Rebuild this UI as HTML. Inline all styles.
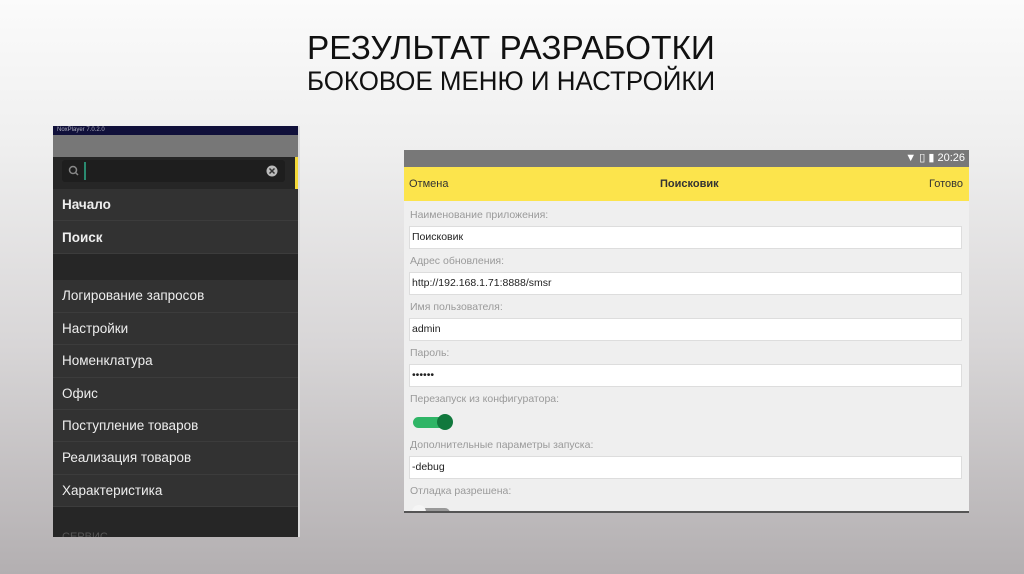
<!DOCTYPE html>
<html><head><meta charset="utf-8"><style>
*{margin:0;padding:0;box-sizing:border-box}
body{width:1024px;height:574px;overflow:hidden;position:relative;font-family:"Liberation Sans",sans-serif;background:linear-gradient(#fbfbfb 0%,#efefef 25%,#d8d6d7 60%,#b3afb1 100%)}
.t1,.t2{position:absolute;left:307px;color:#111;white-space:nowrap;transform-origin:0 0}
.t1{top:29px;font-size:33px;transform:scaleX(1.01)}
.t2{top:66px;font-size:27px;transform:scaleX(0.96)}
.lp{position:absolute;left:53px;top:126px;width:247px;height:411px;background:#303030;overflow:hidden;border-right:2px solid #ddd}
.lp .tb{height:9px;background:#10103a;color:#aab;font-size:6px;padding-left:4px;line-height:9px}
.lp .gb{height:22px;background:#777}
.lp .sa{height:32px;background:#262626;position:relative}
.lp .sb{position:absolute;left:9px;top:3px;width:223px;height:22px;background:#1e1e1e;border-radius:3px}
.it{height:32.4px;line-height:32px;color:#eee;font-size:13.5px;padding-left:9px;border-bottom:1px solid #3c3c3c;background:#323232}
.b{font-weight:bold}
.rp{position:absolute;left:404px;top:150px;width:565px;height:363px;background:#efefef;overflow:hidden;border-bottom:2px solid #555}
.sb2{height:17px;background:#787878;color:#fff;font-size:11px;text-align:right;padding-right:4px;line-height:17px}
.yb{height:34px;background:#fce44c;font-size:11px;color:#333;position:relative;line-height:34px}
.lab{font-size:10.5px;color:#9a9a9a;padding-left:6px;height:23px;line-height:25px}
.inp{margin-left:5px;width:553px;height:23px;background:#fff;border:1px solid #ddd;font-size:10.5px;line-height:21px;padding-left:2px;color:#222}
</style></head><body>
<div class="t1">РЕЗУЛЬТАТ РАЗРАБОТКИ</div>
<div class="t2">БОКОВОЕ МЕНЮ И НАСТРОЙКИ</div>
<div class="lp">
<div class="tb">NoxPlayer 7.0.2.0</div>
<div class="gb"></div>
<div class="sa"><div class="sb">
<svg width="223" height="22" style="position:absolute;left:0;top:0"><circle cx="11" cy="10" r="3.5" fill="none" stroke="#888" stroke-width="1.5"/><line x1="13.5" y1="12.5" x2="16" y2="15" stroke="#888" stroke-width="1.5"/><rect x="22" y="2" width="2" height="18" fill="#2a8a70"/><circle cx="210" cy="11" r="5.5" fill="#bbb"/><path d="M207.5 8.5l5 5M212.5 8.5l-5 5" stroke="#333" stroke-width="1.5"/></svg>
</div><div style="position:absolute;right:0;top:0;width:3px;height:32px;background:#f3d838"></div></div>
<div class="it b">Начало</div>
<div class="it b" style="height:33px;line-height:34px">Поиск</div>
<div style="height:26px;background:#262626"></div>
<div class="it">Логирование запросов</div>
<div class="it">Настройки</div>
<div class="it">Номенклатура</div>
<div class="it">Офис</div>
<div class="it">Поступление товаров</div>
<div class="it">Реализация товаров</div>
<div class="it">Характеристика</div>
<div style="height:40px;background:#262626;color:#555;font-size:11px;padding:24px 0 0 9px">СЕРВИС</div>
</div>
<div class="rp">
<div class="sb2">▼ ▯ ▮ 20:26</div>
<div class="yb"><span style="position:absolute;left:5px">Отмена</span><span style="position:absolute;left:256px;font-weight:bold">Поисковик</span><span style="position:absolute;right:6px">Готово</span></div>
<div style="height:2px"></div>
<div class="lab">Наименование приложения:</div>
<div class="inp">Поисковик</div>
<div class="lab">Адрес обновления:</div>
<div class="inp">http://192.168.1.71:8888/smsr</div>
<div class="lab">Имя пользователя:</div>
<div class="inp">admin</div>
<div class="lab">Пароль:</div>
<div class="inp">••••••</div>
<div class="lab">Перезапуск из конфигуратора:</div>
<div style="height:23px;position:relative"><div style="position:absolute;left:9px;top:7px;width:34px;height:11px;border-radius:6px;background:#2fb566"></div><div style="position:absolute;left:33px;top:4px;width:16px;height:16px;border-radius:50%;background:#11783d"></div></div>
<div class="lab">Дополнительные параметры запуска:</div>
<div class="inp">-debug</div>
<div class="lab">Отладка разрешена:</div>
<div style="position:relative;height:20px"><div style="position:absolute;left:16px;top:6px;width:30px;height:11px;border-radius:5px;background:#999"></div><div style="position:absolute;left:8px;top:3px;width:14px;height:14px;border-radius:50%;background:#f5f5f5"></div></div>
</div>
</body></html>
